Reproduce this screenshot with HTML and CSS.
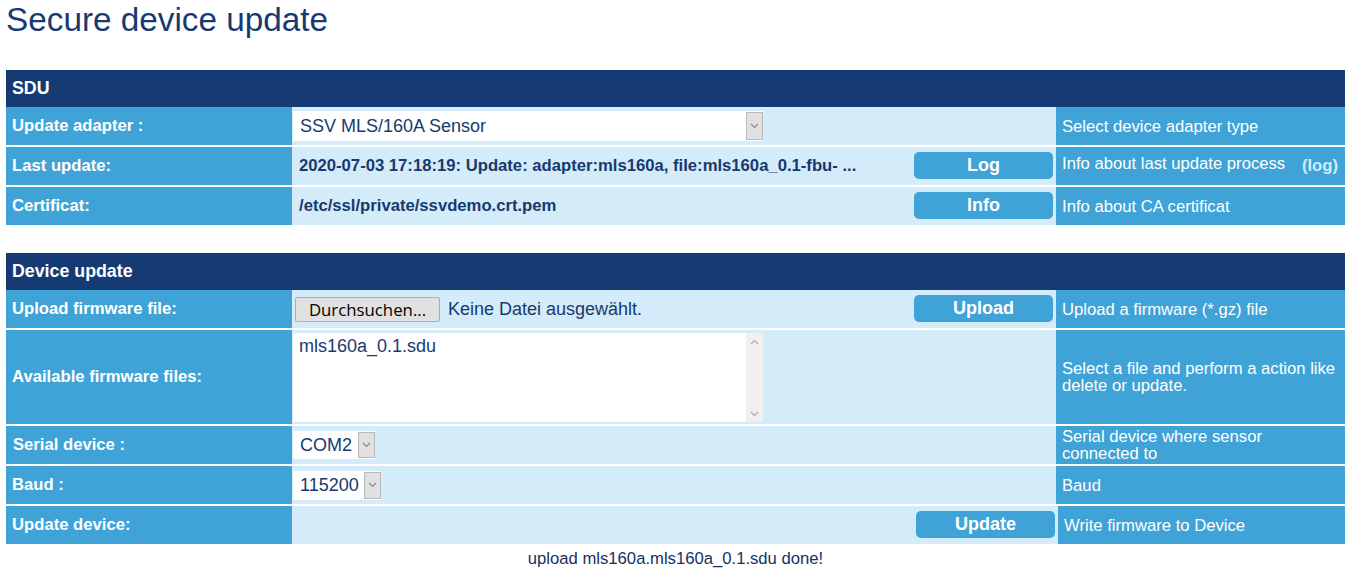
FILE: index.html
```html
<!DOCTYPE html>
<html lang="de">
<head>
<meta charset="utf-8">
<title>Secure device update</title>
<link rel="stylesheet" href="styles.css">
</head>
<body>
<h1 class="title">Secure device update</h1>

<section class="panel">
  <div class="panel-head">SDU</div>
  <div class="row">
    <div class="label">Update adapter :</div>
    <div class="value">
      <div class="select select-wide">
        <span class="select-text">SSV MLS/160A Sensor</span>
        <span class="select-arrow"><svg width="9" height="6" viewBox="0 0 9 6"><polyline points="1,1 4.5,4.5 8,1" fill="none" stroke="#8a8a8a" stroke-width="1.2"/></svg></span>
      </div>
    </div>
    <div class="desc">Select device adapter type</div>
  </div>
  <div class="row">
    <div class="label">Last update:</div>
    <div class="value">
      <span class="value-text grow">2020-07-03 17:18:19: Update: adapter:mls160a, file:mls160a_0.1-fbu- ...</span>
      <span class="btn">Log</span>
    </div>
    <div class="desc desc-split"><span class="desc-main">Info about last update process</span><span class="log-link">(log)</span></div>
  </div>
  <div class="row">
    <div class="label">Certificat:</div>
    <div class="value">
      <span class="value-text grow">/etc/ssl/private/ssvdemo.crt.pem</span>
      <span class="btn">Info</span>
    </div>
    <div class="desc">Info about CA certificat</div>
  </div>
</section>

<section class="panel panel-second">
  <div class="panel-head">Device update</div>
  <div class="row">
    <div class="label">Upload firmware file:</div>
    <div class="value">
      <div class="file grow">
        <span class="file-btn">Durchsuchen...</span>
        <span class="file-name">Keine Datei ausgewählt.</span>
      </div>
      <span class="btn">Upload</span>
    </div>
    <div class="desc">Upload a firmware (*.gz) file</div>
  </div>
  <div class="row row-tall">
    <div class="label">Available firmware files:</div>
    <div class="value">
      <div class="listbox">
        <div class="listbox-items">mls160a_0.1.sdu</div>
        <div class="scrollbar">
          <svg width="9" height="6" viewBox="0 0 9 6"><polyline points="1,5 4.5,1.5 8,5" fill="none" stroke="#a8a8a8" stroke-width="1.1"/></svg>
          <svg width="9" height="6" viewBox="0 0 9 6"><polyline points="1,1 4.5,4.5 8,1" fill="none" stroke="#a8a8a8" stroke-width="1.1"/></svg>
        </div>
      </div>
    </div>
    <div class="desc">Select a file and perform a action like delete or update.</div>
  </div>
  <div class="row">
    <div class="label label-serial">Serial device :</div>
    <div class="value">
      <div class="select select-com">
        <span class="select-text">COM2</span>
        <span class="select-arrow"><svg width="9" height="6" viewBox="0 0 9 6"><polyline points="1,1 4.5,4.5 8,1" fill="none" stroke="#8a8a8a" stroke-width="1.2"/></svg></span>
      </div>
    </div>
    <div class="desc">Serial device where sensor connected to</div>
  </div>
  <div class="row">
    <div class="label">Baud :</div>
    <div class="value">
      <div class="select select-baud">
        <span class="select-text">115200</span>
        <span class="select-arrow"><svg width="9" height="6" viewBox="0 0 9 6"><polyline points="1,1 4.5,4.5 8,1" fill="none" stroke="#8a8a8a" stroke-width="1.2"/></svg></span>
      </div>
    </div>
    <div class="desc">Baud</div>
  </div>
  <div class="row row-last">
    <div class="label">Update device:</div>
    <div class="value">
      <span class="grow"></span>
      <span class="btn">Update</span>
    </div>
    <div class="desc">Write firmware to Device</div>
  </div>
</section>

<p class="status">upload mls160a.mls160a_0.1.sdu done!</p>
</body>
</html>
```

FILE: styles.css
```css
html, body {
  margin: 0;
  padding: 0;
  background: #ffffff;
}

body {
  font-family: "Liberation Sans", Arial, sans-serif;
  font-size: 16.67px;
  color: #173a6e;
  padding: 1px 0 0 6px;
}

.title {
  margin: 0;
  font-size: 33.3px;
  line-height: 38px;
  font-weight: normal;
  color: #173a73;
}

.panel {
  width: 1339px;
  margin-top: 31px;
}

.panel-second {
  margin-top: 28px;
}

.panel-head {
  height: 37px;
  background: #163b74;
  color: #ffffff;
  font-weight: bold;
  font-size: 17.8px;
  display: flex;
  align-items: center;
  padding-left: 6px;
}

.row {
  display: grid;
  grid-template-columns: 286px 764px 289px;
  height: 38px;
}

.row + .row {
  margin-top: 2px;
}

.row-tall {
  height: 94px;
}

.row-last {
  grid-template-columns: 286px 766px 287px;
}

.label {
  background: #3fa3d7;
  color: #ffffff;
  font-weight: bold;
  display: flex;
  align-items: center;
  padding-left: 6px;
}

.label-serial {
  padding-left: 7px;
}

.value {
  background: #d4ebf9;
  display: flex;
  align-items: center;
  padding: 0 3px 0 1px;
}

.grow {
  flex: 1;
}

.value-text {
  padding-left: 6px;
  font-weight: bold;
  color: #173a6e;
  white-space: nowrap;
}

.desc {
  background: #3fa3d7;
  color: #ffffff;
  display: flex;
  align-items: center;
  padding: 0 7px 0 6px;
  line-height: 17px;
}

.desc-split {
  justify-content: space-between;
}

.desc-main {
  padding-bottom: 6px;
}

.log-link {
  color: #d4ebf9;
  font-weight: bold;
  padding-bottom: 2px;
}

.btn {
  width: 139px;
  height: 27px;
  margin-bottom: 2px;
  border-radius: 5px;
  background: #3fa3d7;
  color: #ffffff;
  font-weight: bold;
  font-size: 18px;
  display: flex;
  align-items: center;
  justify-content: center;
}

/* select boxes */
.select {
  display: flex;
  background: #ffffff;
  height: 30px;
  font-size: 18px;
  color: #173a6e;
}

.select-wide {
  width: 470px;
}

.select-com {
  width: 82px;
  height: 28px;
}

.select-baud {
  width: 88px;
  height: 29px;
}

.select-text {
  flex: 1;
  padding-left: 7px;
  display: flex;
  align-items: center;
  white-space: nowrap;
}

.select-arrow {
  width: 15px;
  margin: 1px 0;
  background: #e1e1e1;
  border: 1px solid #b9b9b9;
  display: flex;
  align-items: center;
  justify-content: center;
}

/* file input */
.file {
  display: flex;
  align-items: center;
}

.file-btn {
  margin-left: 2px;
  width: 145px;
  height: 25px;
  box-sizing: border-box;
  background: #e1e1e1;
  border: 1px solid #adadad;
  border-radius: 2px;
  color: #000000;
  font-family: "Open Sans", "Liberation Sans", sans-serif;
  font-size: 16.8px;
  display: flex;
  align-items: center;
  justify-content: center;
}

.file-name {
  margin-left: 8px;
  font-size: 18px;
  color: #173a6e;
}

/* list box */
.listbox {
  width: 470px;
  height: 89px;
  background: #ffffff;
  display: flex;
  margin-top: 1px;
}

.listbox-items {
  flex: 1;
  padding: 2px 6px;
  font-size: 18px;
  line-height: 22px;
  color: #173a6e;
}

.scrollbar {
  width: 17px;
  background: #f0f0f0;
  display: flex;
  flex-direction: column;
  justify-content: space-between;
  align-items: center;
  padding: 6px 0 5px;
}

.status {
  width: 1339px;
  margin: 5px 0 0;
  text-align: center;
  color: #17305f;
}
```
